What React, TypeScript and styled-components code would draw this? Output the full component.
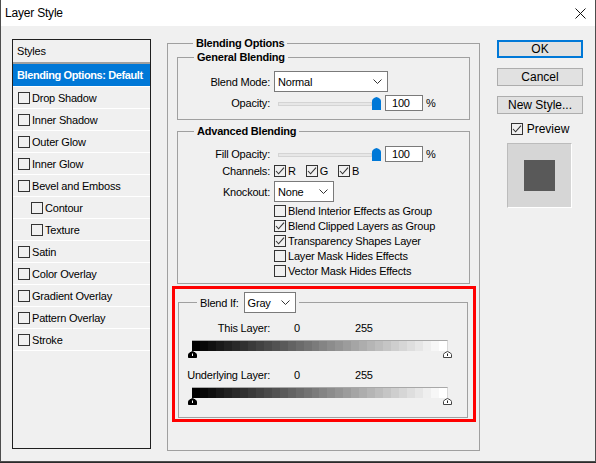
import styled, { createGlobalStyle } from 'styled-components';

const GlobalStyle = createGlobalStyle`
  html, body {
    margin: 0;
    padding: 0;
    background: #2b2b2b;
  }

  body {
    font-family: 'Liberation Sans', Arial, sans-serif;
    font-size: 11px;
    letter-spacing: -0.2px;
    color: #000;
  }

  * {
    box-sizing: border-box;
  }
`;

const styleItems = [
  { label: 'Drop Shadow' },
  { label: 'Inner Shadow' },
  { label: 'Outer Glow' },
  { label: 'Inner Glow' },
  { label: 'Bevel and Emboss' },
  { label: 'Contour', indent: true },
  { label: 'Texture', indent: true },
  { label: 'Satin' },
  { label: 'Color Overlay' },
  { label: 'Gradient Overlay' },
  { label: 'Pattern Overlay' },
  { label: 'Stroke' },
];

const advancedChecks = [
  { label: 'Blend Interior Effects as Group', checked: false },
  { label: 'Blend Clipped Layers as Group', checked: true },
  { label: 'Transparency Shapes Layer', checked: true },
  { label: 'Layer Mask Hides Effects', checked: false },
  { label: 'Vector Mask Hides Effects', checked: false },
];

// banded black -> white ramp, like the blend-if bars
const RAMP_STEPS = 32;
const rampStops = Array.from({ length: RAMP_STEPS }, (_, i) => {
  const v = Math.round((i / (RAMP_STEPS - 1)) * 255);
  const from = ((i / RAMP_STEPS) * 100).toFixed(2);
  const to = (((i + 1) / RAMP_STEPS) * 100).toFixed(2);
  return `rgb(${v},${v},${v}) ${from}% ${to}%`;
}).join(', ');

const CloseIcon = () => (
  <svg width='11' height='11' viewBox='0 0 11 11'>
    <path d='M0.5 0.5 L10.5 10.5 M10.5 0.5 L0.5 10.5' stroke='#111' strokeWidth='1' />
  </svg>
);

const Chevron = () => (
  <svg width='9' height='5' viewBox='0 0 9 5'>
    <polyline points='0.5,0.5 4.5,4.5 8.5,0.5' fill='none' stroke='#333' strokeWidth='1' />
  </svg>
);

const CheckMark = () => (
  <svg width='10' height='10' viewBox='0 0 10 10'>
    <polyline points='1,5 3.6,7.8 9,1.6' fill='none' stroke='#333' strokeWidth='1.1' />
  </svg>
);

const SliderThumb = () => (
  <svg width='9' height='13' viewBox='0 0 9 13'>
    <path d='M0 13 V4 Q0 1.5 4.5 0 Q9 1.5 9 4 V13 Z' fill='#0078d7' />
  </svg>
);

const RampStop = ({ dark }: { dark?: boolean }) => (
  <svg width='9' height='7' viewBox='0 0 9 7'>
    <path
      d='M0.5 6.5 V3.5 Q0.5 2 4.5 0.5 Q8.5 2 8.5 3.5 V6.5 Z'
      fill={dark ? '#000' : '#fff'}
      stroke={dark ? '#000' : '#444'}
      strokeWidth='1'
    />
    <line x1='4.5' y1='2.5' x2='4.5' y2='5' stroke={dark ? '#fff' : '#222'} strokeWidth='1' />
  </svg>
);

const Check = ({ checked }: { checked?: boolean }) => (
  <CheckBox>{checked && <CheckMark />}</CheckBox>
);

const Select = ({ value, width }: { value: string; width: number }) => (
  <SelectBox $w={width}>
    <span>{value}</span>
    <Chevron />
  </SelectBox>
);

const OpacityControl = () => (
  <ControlGroup>
    <Slider>
      <Track />
      <SliderThumb />
    </Slider>
    <NumberBox>100</NumberBox>
    <span>%</span>
  </ControlGroup>
);

const LevelBar = () => (
  <>
    <Ramp />
    <RampStops>
      <RampStop dark />
      <RampStop />
    </RampStops>
  </>
);

const App = () => {
  return (
    <>
      <GlobalStyle />
      <Window>
        <TitleBar>
          <Title>Layer Style</Title>
          <CloseIcon />
        </TitleBar>

        <Body>
          <StylesPanel>
            <PanelHeader>Styles</PanelHeader>
            <StyleRow $selected>Blending Options: Default</StyleRow>
            {styleItems.map(item => (
              <StyleRow key={item.label} $indent={item.indent}>
                <Check />
                <span>{item.label}</span>
              </StyleRow>
            ))}
          </StylesPanel>

          <OptionsSet>
            <Legend>Blending Options</Legend>

            <Group $pb={8}>
              <Legend>General Blending</Legend>
              <Field $h={21} $mt={7}>
                <Label>Blend Mode:</Label>
                <Select value='Normal' width={114} />
              </Field>
              <Field $h={16} $mt={3}>
                <Label>Opacity:</Label>
                <OpacityControl />
              </Field>
            </Group>

            <Group $mt={4} $pb={5}>
              <Legend>Advanced Blending</Legend>
              <Field $h={16} $mt={8}>
                <Label>Fill Opacity:</Label>
                <OpacityControl />
              </Field>
              <Field $h={13} $mt={2}>
                <Label>Channels:</Label>
                <Channels>
                  <CheckItem>
                    <Check checked />
                    <span>R</span>
                  </CheckItem>
                  <CheckItem>
                    <Check checked />
                    <span>G</span>
                  </CheckItem>
                  <CheckItem>
                    <Check checked />
                    <span>B</span>
                  </CheckItem>
                </Channels>
              </Field>
              <Field $h={21} $mt={4}>
                <Label>Knockout:</Label>
                <Select value='None' width={60} />
              </Field>
              <CheckList>
                {advancedChecks.map(item => (
                  <CheckItem key={item.label} $h={15}>
                    <Check checked={item.checked} />
                    <span>{item.label}</span>
                  </CheckItem>
                ))}
              </CheckList>
            </Group>

            <Highlight>
              <BlendIfSet>
                <BlendIfLegend>
                  <span>Blend If:</span>
                  <Select value='Gray' width={52} />
                </BlendIfLegend>

                <LevelRow $mt={8}>
                  <Label>This Layer:</Label>
                  <LevelValues>
                    <span>0</span>
                    <span>255</span>
                  </LevelValues>
                </LevelRow>
                <LevelBar />

                <LevelRow $mt={10}>
                  <Label>Underlying Layer:</Label>
                  <LevelValues>
                    <span>0</span>
                    <span>255</span>
                  </LevelValues>
                </LevelRow>
                <LevelBar />
              </BlendIfSet>
            </Highlight>
          </OptionsSet>

          <Actions>
            <Button $primary>OK</Button>
            <Button>Cancel</Button>
            <Button>New Style...</Button>
            <PreviewToggle>
              <Check checked />
              <span>Preview</span>
            </PreviewToggle>
            <Swatch>
              <SwatchFill />
            </Swatch>
          </Actions>
        </Body>
      </Window>
    </>
  );
};

const Window = styled.div`
  width: 596px;
  height: 462px;
  display: flex;
  flex-direction: column;
  background: #f0f0f0;
  border: 1px solid #4d4d4d;
  border-top: none;
`;

const TitleBar = styled.div`
  height: 26px;
  flex-shrink: 0;
  display: flex;
  align-items: center;
  justify-content: space-between;
  padding: 0 9px 0 4px;
  background: #fff;
`;

const Title = styled.span`
  font-size: 12px;
  letter-spacing: -0.2px;
`;

const Body = styled.div`
  display: flex;
  align-items: flex-start;
  padding: 10px 0 0 11px;
`;

const StylesPanel = styled.div`
  width: 139px;
  height: 410px;
  margin-top: 3px;
  background: #f0f0f0;
  border: 1px solid #1f1f1f;
`;

const PanelHeader = styled.div`
  height: 24px;
  display: flex;
  align-items: center;
  padding-left: 4px;
  border-bottom: 2px solid #a0a0a0;
`;

const StyleRow = styled.div<{ $selected?: boolean; $indent?: boolean }>`
  height: ${({ $selected }) => ($selected ? 23 : 22)}px;
  display: flex;
  align-items: center;
  gap: 2px;
  padding-left: ${({ $indent, $selected }) => ($selected ? 4 : $indent ? 18 : 5)}px;
  border-bottom: 1px solid #fff;
  background: ${({ $selected }) => ($selected ? '#0078d7' : 'transparent')};
  color: ${({ $selected }) => ($selected ? '#fff' : '#000')};
  font-weight: ${({ $selected }) => ($selected ? 700 : 400)};
  letter-spacing: ${({ $selected }) => ($selected ? -0.4 : -0.2)}px;
`;

const CheckBox = styled.span`
  width: 12px;
  height: 12px;
  flex-shrink: 0;
  display: inline-flex;
  align-items: center;
  justify-content: center;
  border: 1px solid #333;
`;

const OptionsSet = styled.fieldset`
  width: 313px;
  height: 415px;
  margin: 0 0 0 16px;
  padding: 0 9px;
  min-width: 0;
  border: 1px solid #a0a0a0;
`;

const Legend = styled.legend`
  margin-left: 16px;
  padding: 0 3px;
  line-height: 14px;
  font-weight: 700;
`;

const Group = styled.fieldset<{ $mt?: number; $pb?: number }>`
  margin: ${({ $mt }) => $mt ?? 0}px 0 0;
  padding: 0 0 ${({ $pb }) => $pb ?? 0}px;
  min-width: 0;
  border: 1px solid #a0a0a0;
`;

const Field = styled.div<{ $h: number; $mt: number }>`
  height: ${({ $h }) => $h}px;
  margin-top: ${({ $mt }) => $mt}px;
  display: grid;
  grid-template-columns: 92px auto;
  column-gap: 4px;
  align-items: center;
  justify-content: start;
`;

const Label = styled.span`
  text-align: right;
  white-space: nowrap;
`;

const SelectBox = styled.div<{ $w: number }>`
  width: ${({ $w }) => $w}px;
  height: 21px;
  display: flex;
  align-items: center;
  justify-content: space-between;
  padding: 0 5px 0 3px;
  background: #fff;
  border: 1px solid #7a7a7a;
`;

const ControlGroup = styled.div`
  display: flex;
  align-items: center;
  gap: 3px;
`;

const Slider = styled.div`
  display: flex;
  align-items: center;
  margin: 0 1px 0 4px;
`;

const Track = styled.div`
  width: 94px;
  height: 4px;
  margin-top: 2px;
  background: #e7e7e7;
  border: 1px solid #d4d4d4;
`;

const NumberBox = styled.div`
  width: 38px;
  height: 16px;
  display: flex;
  align-items: center;
  padding-left: 6px;
  background: #fff;
  border: 1px solid #7a7a7a;
`;

const Channels = styled.div`
  display: flex;
  align-items: center;
  gap: 10px;
`;

const CheckItem = styled.div<{ $h?: number }>`
  height: ${({ $h }) => ($h ? `${$h}px` : 'auto')};
  display: flex;
  align-items: center;
  gap: 2px;
`;

const CheckList = styled.div`
  margin-top: 1px;
  padding-left: 96px;
`;

const Highlight = styled.div`
  margin: 2px -6px 0 -5px;
  padding: 3px 5px 1px 3px;
  border: 3px solid #ff0000;
`;

const BlendIfSet = styled.fieldset`
  margin: 0;
  padding: 0 0 12px;
  min-width: 0;
  border: 1px solid #a0a0a0;
`;

const BlendIfLegend = styled.legend`
  display: flex;
  align-items: center;
  gap: 5px;
  margin-left: 18px;
  padding: 0 3px;
`;

const LevelRow = styled.div<{ $mt: number }>`
  height: 14px;
  margin-top: ${({ $mt }) => $mt}px;
  display: flex;
  align-items: center;

  & > ${Label} {
    width: 91px;
  }
`;

const LevelValues = styled.div`
  display: grid;
  grid-template-columns: 61px auto;
  margin-left: 24px;
`;

const Ramp = styled.div`
  width: 256px;
  height: 11px;
  margin: 5px 0 0 13px;
  background: linear-gradient(to right, ${rampStops});
  border-top: 1px solid #a8a8a8;
  border-right: 1px solid #d8d8d8;
`;

const RampStops = styled.div`
  width: 264px;
  height: 7px;
  margin-left: 9px;
  display: flex;
  justify-content: space-between;

  svg {
    display: block;
  }
`;

const Actions = styled.div`
  width: 86px;
  margin: 4px 0 0 17px;
  display: flex;
  flex-direction: column;
  gap: 10px;
  font-size: 12px;
  letter-spacing: 0;
`;

const Button = styled.div<{ $primary?: boolean }>`
  height: 18px;
  display: flex;
  align-items: center;
  justify-content: center;
  background: #e1e1e1;
  border: ${({ $primary }) => ($primary ? '2px solid #0078d7' : '1px solid #adadad')};
`;

const PreviewToggle = styled.div`
  height: 12px;
  margin-top: -1px;
  display: flex;
  align-items: center;
  justify-content: center;
  gap: 4px;
`;

const Swatch = styled.div`
  width: 65px;
  height: 65px;
  margin: -2px 0 0 10px;
  display: flex;
  align-items: center;
  justify-content: center;
  background: #d6d6d6;
  border: 1px solid #fff;
  border-top-color: #bcbcbc;
  border-left-color: #bcbcbc;
`;

const SwatchFill = styled.div`
  width: 31px;
  height: 31px;
  background: #595959;
`;

export default App;
